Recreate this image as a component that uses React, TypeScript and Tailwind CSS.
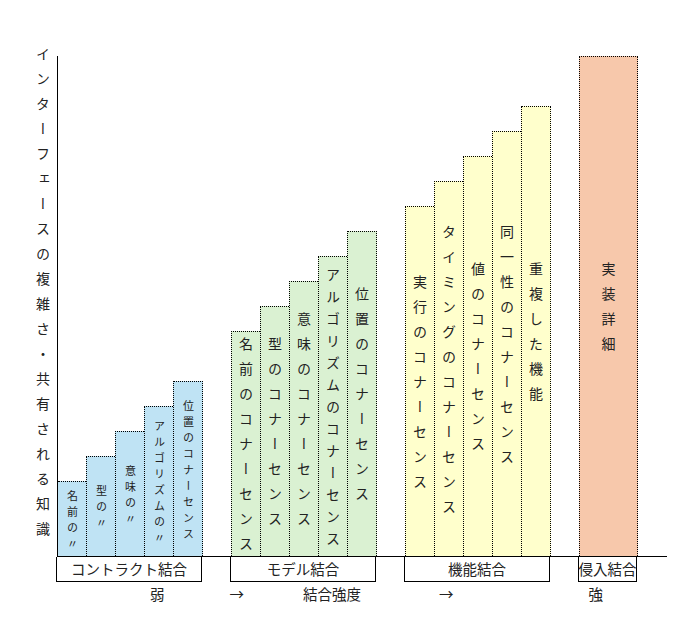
import React from 'react';

type Bar = { label: string; h: number; size?: 'sm' | 'md'; gap?: number };
type Group = { name: string; color: string; bars: Bar[] };

const FONT = "font-['Noto_Sans_CJK_JP','Noto_Sans',sans-serif]";

const groups: Group[] = [
    {
        name: 'コントラクト結合',
        color: 'bg-[#bfe3f4]',
        bars: [
            { label: '名前の〃', h: 75, size: 'sm' },
            { label: '型の〃', h: 100, size: 'sm' },
            { label: '意味の〃', h: 125, size: 'sm' },
            { label: 'アルゴリズムの〃', h: 150, size: 'sm' },
            { label: '位置のコナーセンス', h: 175, size: 'sm' },
        ],
    },
    {
        name: 'モデル結合',
        color: 'bg-[#daf1d2]',
        bars: [
            { label: '名前のコナーセンス', h: 225 },
            { label: '型のコナーセンス', h: 250 },
            { label: '意味のコナーセンス', h: 275 },
            { label: 'アルゴリズムのコナーセンス', h: 300, gap: 8 },
            { label: '位置のコナーセンス', h: 325 },
        ],
    },
    {
        name: '機能結合',
        color: 'bg-[#ffffcc]',
        bars: [
            { label: '実行のコナーセンス', h: 350 },
            { label: 'タイミングのコナーセンス', h: 375 },
            { label: '値のコナーセンス', h: 400 },
            { label: '同一性のコナーセンス', h: 425 },
            { label: '重複した機能', h: 450 },
        ],
    },
    {
        name: '侵入結合',
        color: 'bg-[#f7c8ab]',
        bars: [{ label: '実装詳細', h: 500 }],
    },
];

function VerticalText({ text, size, gap }: { text: string; size: 'sm' | 'md'; gap?: number }) {
    // vertical writing; negative bottom margin cancels the trailing letter-spacing so glyphs stay centered
    const ls = gap ?? (size === 'sm' ? 5 : 11);
    return (
        <span
            className={`[writing-mode:vertical-rl] whitespace-nowrap leading-none text-[#222] ${size === 'sm' ? 'text-[11px]' : 'text-[14px]'}`}
            style={{ letterSpacing: ls, marginBottom: -ls }}
        >
            {text}
        </span>
    );
}

function BarGroup({ group, first }: { group: Group; first: boolean }) {
    const single = group.bars.length === 1;
    return (
        <div className="flex items-end">
            {group.bars.map((bar, i) => {
                const last = i === group.bars.length - 1;
                const noLeft = first && i === 0;
                const width = single ? 59 : (noLeft ? 28 : 29) + (last ? 1 : 0);
                return (
                    <div
                        key={i}
                        className={`flex items-center justify-center border-t border-dotted border-black ${group.color} ${noLeft ? '' : 'border-l'} ${last ? 'border-r' : ''}`}
                        style={{ width, height: bar.h }}
                    >
                        <VerticalText text={bar.label} size={bar.size ?? 'md'} gap={bar.gap} />
                    </div>
                );
            })}
        </div>
    );
}

export default function App() {
    return (
        <div className={`w-[691px] h-[620px] bg-white flex ${FONT}`}>
            <div className="w-[57px] pl-[36px] pt-[47px]">
                <span className="[writing-mode:vertical-rl] text-[14px] leading-none text-[#222]" style={{ letterSpacing: 11 }}>
                    インターフェースの複雑さ・共有される知識
                </span>
            </div>

            <div className="pt-[56px] w-[610px]">
                <div className="h-[501px] border-l border-b border-black flex items-end gap-[28px]">
                    {groups.map((g, i) => (
                        <BarGroup key={g.name} group={g} first={i === 0} />
                    ))}
                </div>

                <div className="flex gap-[28px] text-[14.5px] text-[#222] leading-none">
                    {groups.map((g, i) => (
                        <div
                            key={g.name}
                            className={`h-[25px] flex items-center justify-center border-b border-r border-black whitespace-nowrap ${i === 0 ? 'border-l -ml-px w-[146px]' : 'border-l'}`}
                            style={i === 0 ? undefined : { width: g.bars.length === 1 ? 59 : 146 }}
                        >
                            {g.name}
                        </div>
                    ))}
                </div>

                <div className="flex text-[14.5px] text-[#222] leading-none pt-[5px]">
                    <span className="ml-[93px]">弱</span>
                    <span className="ml-[65px]">→</span>
                    <span className="ml-[59px]">結合強度</span>
                    <span className="ml-[78px]">→</span>
                    <span className="ml-[135px]">強</span>
                </div>
            </div>
        </div>
    );
}
